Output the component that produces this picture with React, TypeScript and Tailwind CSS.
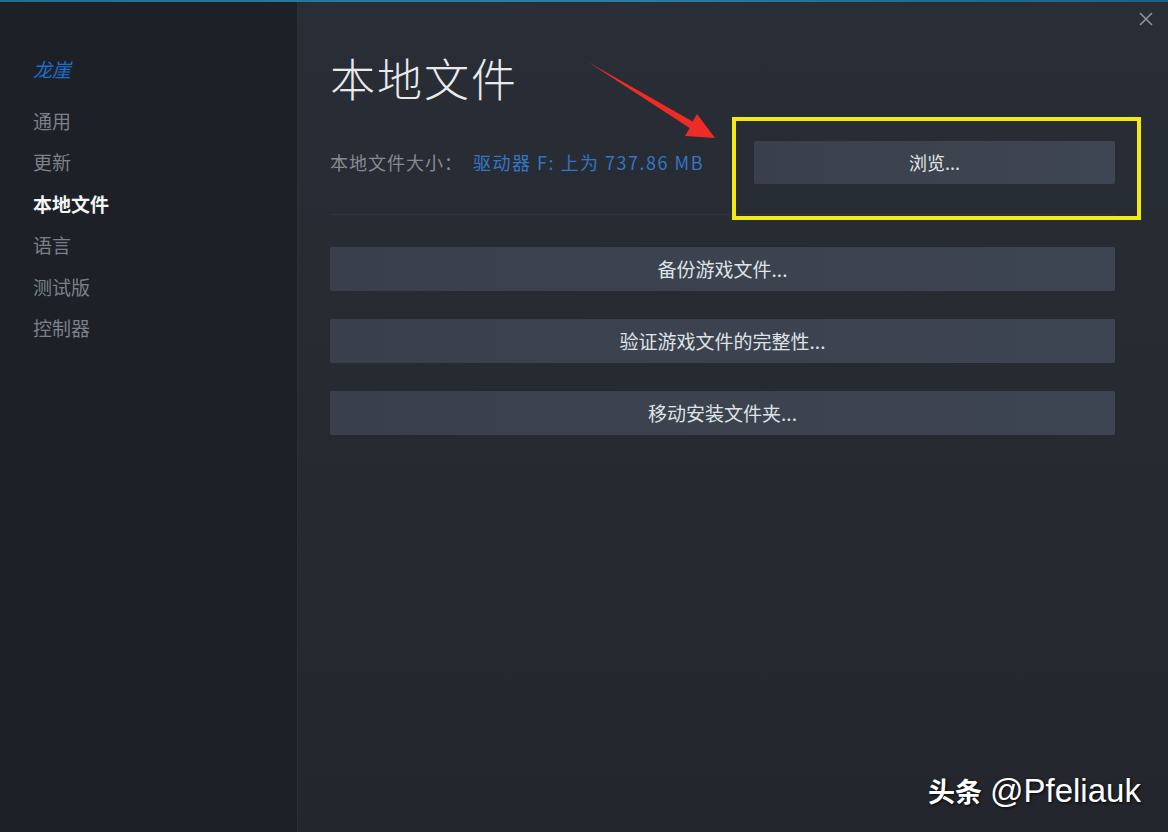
import React from "react";

const cjk = { fontFamily: '"Noto Sans CJK SC", "Noto Sans", sans-serif' };

function NavItem({ label, active }: { label: string; active?: boolean }) {
  return (
    <div
      className={
        "h-[41.5px] flex items-center text-[19px] " +
        (active ? "text-[#f2f4f5] font-bold" : "text-[#7b8189]")
      }
    >
      {label}
    </div>
  );
}

function WideButton({ label }: { label: string }) {
  return (
    <div className="h-[44px] w-full flex items-center justify-center bg-gradient-to-r from-[#3a404b] to-[#3e4552] text-[#dfe3e7] text-[19px] rounded-[2px]">
      {label}
    </div>
  );
}

export default function App() {
  return (
    <div
      className="relative w-[1168px] h-[832px] overflow-hidden bg-[#1e2127]"
      style={cjk}
    >
      <div className="h-[2px] bg-gradient-to-r from-[#1f6f93] via-[#2a7fa6] to-[#1d5f86]" />
      <div className="flex h-[830px]">
        {/* Sidebar */}
        <div className="w-[297px] h-full bg-[#1d2026] pl-[33px] pt-[47px] flex flex-col">
          <div className="h-[41px] flex items-center text-[19px] text-[#1f6ecf] italic">龙崖</div>
          <div className="h-[10px]" />
          <NavItem label="通用" />
          <NavItem label="更新" />
          <NavItem label="本地文件" active />
          <NavItem label="语言" />
          <NavItem label="测试版" />
          <NavItem label="控制器" />
        </div>
        {/* Main */}
        <div className="relative flex-1 h-full bg-gradient-to-b from-[#292d35] via-[#262a31] to-[#23272d] border-l border-[#2b3038] pl-[32px] pr-[53px] pt-[44px]">
          <div className="h-[62px] flex items-center text-[45px] font-light text-[#e8eaec] tracking-[2px] leading-none">
            本地文件
          </div>
          <div className="mt-[32px] flex items-center h-[45px]">
            <div className="text-[18px] text-[#858b93] w-[143px] tracking-[1px]">本地文件大小：</div>
            <div className="text-[18px] text-[#3575c6] w-[281px] tracking-[1.5px]">驱动器 F: 上为 737.86 MB</div>
            <div className="flex-1 h-[43px] flex items-center justify-center bg-gradient-to-r from-[#3a404b] to-[#3f4653] text-[#e1e4e7] text-[18px] rounded-[2px]">
              浏览...
            </div>
          </div>
          <div className="mt-[29px] h-px bg-[#30353d]" />
          <div className="mt-[32px] flex flex-col gap-[28px]">
            <WideButton label="备份游戏文件..." />
            <WideButton label="验证游戏文件的完整性..." />
            <WideButton label="移动安装文件夹..." />
          </div>
          {/* close */}
          <svg
            className="absolute right-[15px] top-[10px]"
            width="14"
            height="14"
            viewBox="0 0 14 14"
          >
            <path d="M1 1 L13 13 M13 1 L1 13" stroke="#8d939a" strokeWidth="1.6" />
          </svg>
        </div>
      </div>

      {/* annotation: yellow box */}
      <div className="absolute left-[732px] top-[117px] w-[409px] h-[103px] border-[4px] border-[#f3ea14]" />

      {/* annotation: red arrow */}
      <svg className="absolute left-0 top-0" width="1168" height="832" viewBox="0 0 1168 832">
        <polygon
          points="588,62 692.7,121.4 697,114 715,138 685,136 689.7,128"
          fill="#ee2b26"
        />
      </svg>

      {/* watermark */}
      <div
        className="absolute left-[928px] top-[766px] flex items-baseline text-white [text-shadow:1px_1px_3px_rgba(0,0,0,0.9)]"
      >
        <span className="text-[27px] font-bold" style={cjk}>头条</span>
        <span
          className="ml-[8px] text-[33px]"
          style={{ fontFamily: '"Liberation Sans", Arial, sans-serif' }}
        >
          @Pfeliauk
        </span>
      </div>
    </div>
  );
}
